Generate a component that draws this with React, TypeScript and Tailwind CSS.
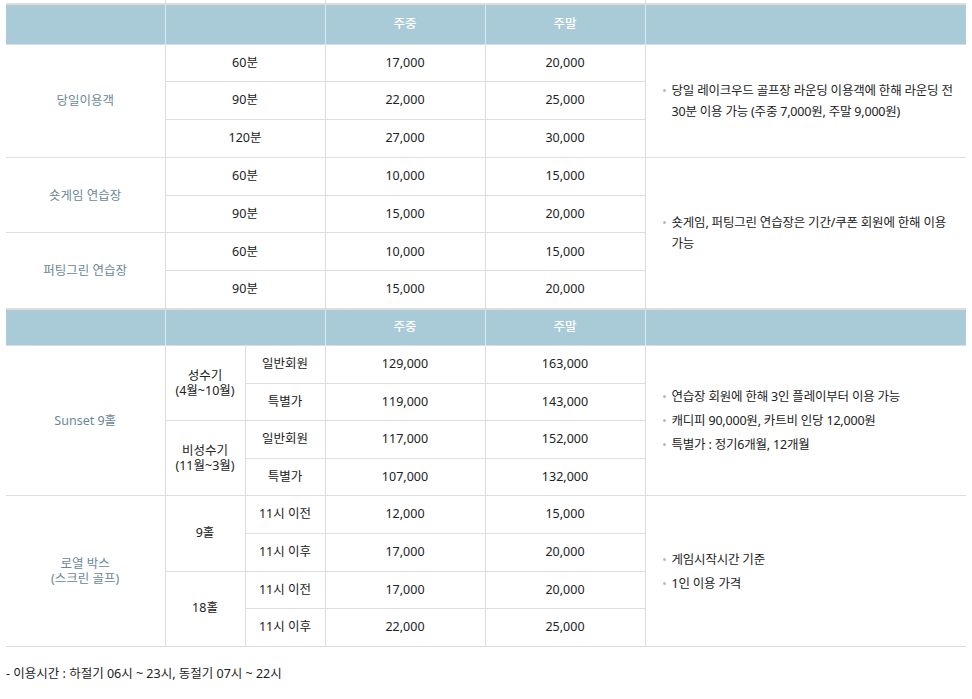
import type { ReactNode } from 'react';

const font = { fontFamily: '"Noto Sans", "Noto Sans CJK KR", sans-serif' };

// shared cell styles
const td = 'border border-[#dddddd] text-center align-middle p-0 text-[#222222]';
const label = 'border border-[#dddddd] border-l-0 text-center align-middle p-0 text-[#6a8797] leading-[15px]';
const th = 'bg-[#a9cbd7] border-t-2 border-t-[#dddddd] border-x border-x-[#dce9ee] text-white font-medium text-center p-0';
const row = 'h-[37.8px]';
const row2 = 'h-[37.6px]';

function Bullet({ children }: { children: ReactNode }) {
  return (
    <li className="flex items-start leading-[21px] whitespace-nowrap">
      <span className="mt-[9px] mr-[6px] w-[3px] h-[3px] rounded-full bg-[#a8c0cc] shrink-0" />
      <span>{children}</span>
    </li>
  );
}

function Note({ rows, children }: { rows: number; children: ReactNode }) {
  return (
    <td rowSpan={rows} className="border border-[#dddddd] border-r-0 align-middle pl-[17px] pr-0 text-[#222222] tracking-[-0.2px]">
      <ul className="flex flex-col gap-[3px]">{children}</ul>
    </td>
  );
}

function Header({ h }: { h: string }) {
  return (
    <tr className={h}>
      <td className={th + ' border-l-0'} />
      <td colSpan={2} className={th} />
      <td className={th}>주중</td>
      <td className={th}>주말</td>
      <td className={th + ' border-r-0'} />
    </tr>
  );
}

export default function App() {
  return (
    <div className="bg-white min-h-screen px-[6px] text-[12.5px]" style={font}>
      <table className="w-[960px] table-fixed border-collapse">
        <colgroup>
          <col className="w-[159px]" />
          <col className="w-[80px]" />
          <col className="w-[80px]" />
          <col className="w-[160px]" />
          <col className="w-[160px]" />
          <col className="w-[321px]" />
        </colgroup>
        <tbody>
          {/* tail of the table above */}
          <tr className="h-[4px] leading-none">
            <td className="p-0 border-r border-[#dddddd]" />
            <td colSpan={2} className="p-0 border-r border-[#dddddd]" />
            <td colSpan={2} className="p-0 border-r border-[#dddddd]" />
            <td className="p-0" />
          </tr>

          <Header h="h-[40px]" />
          <tr className={row}>
            <td rowSpan={3} className={label}>당일이용객</td>
            <td colSpan={2} className={td}>60분</td>
            <td className={td}>17,000</td>
            <td className={td}>20,000</td>
            <Note rows={3}>
              <Bullet>
                당일 레이크우드 골프장 라운딩 이용객에 한해 라운딩 전<br />
                30분 이용 가능 (주중 7,000원, 주말 9,000원)
              </Bullet>
            </Note>
          </tr>
          <tr className={row}>
            <td colSpan={2} className={td}>90분</td>
            <td className={td}>22,000</td>
            <td className={td}>25,000</td>
          </tr>
          <tr className={row}>
            <td colSpan={2} className={td}>120분</td>
            <td className={td}>27,000</td>
            <td className={td}>30,000</td>
          </tr>
          <tr className={row}>
            <td rowSpan={2} className={label}>숏게임 연습장</td>
            <td colSpan={2} className={td}>60분</td>
            <td className={td}>10,000</td>
            <td className={td}>15,000</td>
            <Note rows={4}>
              <Bullet>
                숏게임, 퍼팅그린 연습장은 기간/쿠폰 회원에 한해 이용<br />
                가능
              </Bullet>
            </Note>
          </tr>
          <tr className={row}>
            <td colSpan={2} className={td}>90분</td>
            <td className={td}>15,000</td>
            <td className={td}>20,000</td>
          </tr>
          <tr className={row}>
            <td rowSpan={2} className={label}>퍼팅그린 연습장</td>
            <td colSpan={2} className={td}>60분</td>
            <td className={td}>10,000</td>
            <td className={td}>15,000</td>
          </tr>
          <tr className={row}>
            <td colSpan={2} className={td}>90분</td>
            <td className={td}>15,000</td>
            <td className={td}>20,000</td>
          </tr>

          <Header h="h-[37px]" />
          <tr className={row2}>
            <td rowSpan={4} className={label}>Sunset 9홀</td>
            <td rowSpan={2} className={td + ' leading-[15px]'}>성수기<br />(4월~10월)</td>
            <td className={td}>일반회원</td>
            <td className={td}>129,000</td>
            <td className={td}>163,000</td>
            <Note rows={4}>
              <Bullet>연습장 회원에 한해 3인 플레이부터 이용 가능</Bullet>
              <Bullet>캐디피 90,000원, 카트비 인당 12,000원</Bullet>
              <Bullet>특별가 : 정기6개월, 12개월</Bullet>
            </Note>
          </tr>
          <tr className={row2}>
            <td className={td}>특별가</td>
            <td className={td}>119,000</td>
            <td className={td}>143,000</td>
          </tr>
          <tr className={row2}>
            <td rowSpan={2} className={td + ' leading-[15px]'}>비성수기<br />(11월~3월)</td>
            <td className={td}>일반회원</td>
            <td className={td}>117,000</td>
            <td className={td}>152,000</td>
          </tr>
          <tr className={row2}>
            <td className={td}>특별가</td>
            <td className={td}>107,000</td>
            <td className={td}>132,000</td>
          </tr>
          <tr className={row2}>
            <td rowSpan={4} className={label}>로열 박스<br />(스크린 골프)</td>
            <td rowSpan={2} className={td}>9홀</td>
            <td className={td}>11시 이전</td>
            <td className={td}>12,000</td>
            <td className={td}>15,000</td>
            <Note rows={4}>
              <Bullet>게임시작시간 기준</Bullet>
              <Bullet>1인 이용 가격</Bullet>
            </Note>
          </tr>
          <tr className={row2}>
            <td className={td}>11시 이후</td>
            <td className={td}>17,000</td>
            <td className={td}>20,000</td>
          </tr>
          <tr className={row2}>
            <td rowSpan={2} className={td}>18홀</td>
            <td className={td}>11시 이전</td>
            <td className={td}>17,000</td>
            <td className={td}>20,000</td>
          </tr>
          <tr className={row2}>
            <td className={td}>11시 이후</td>
            <td className={td}>22,000</td>
            <td className={td}>25,000</td>
          </tr>
        </tbody>
      </table>
      <p className="mt-[17px] leading-[20px] text-[#222222]">- 이용시간 : 하절기 06시 ~ 23시, 동절기 07시 ~ 22시</p>
    </div>
  );
}
